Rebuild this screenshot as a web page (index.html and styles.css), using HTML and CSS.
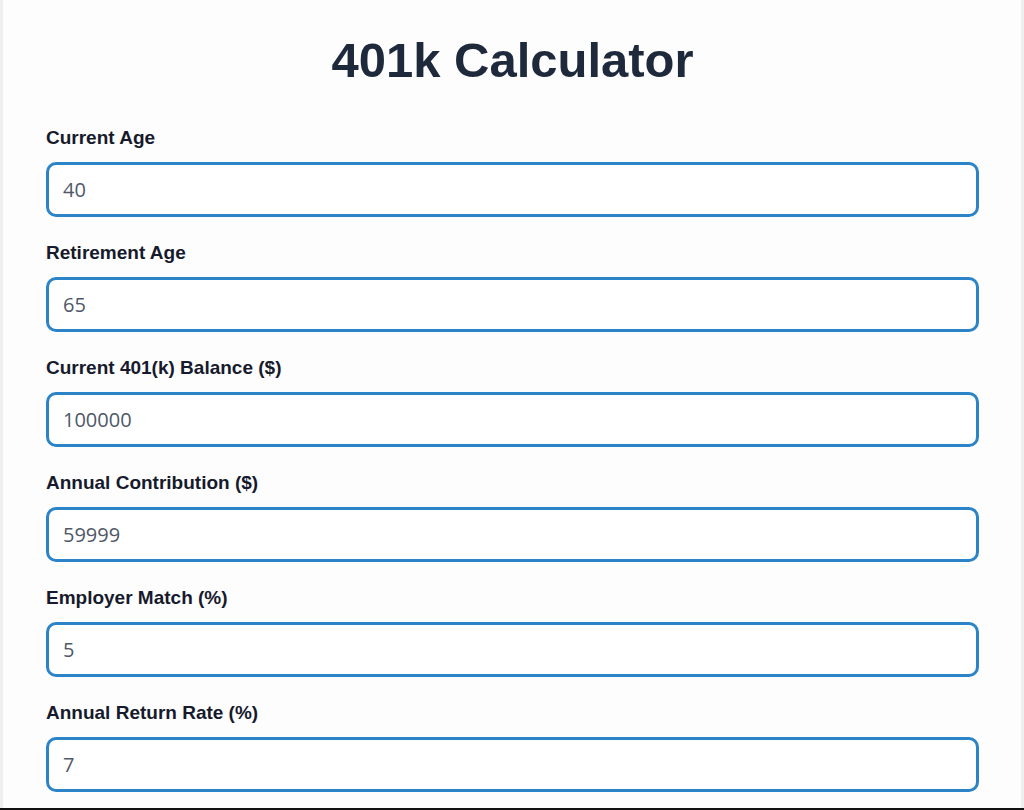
FILE: index.html
```html
<!DOCTYPE html>
<html lang="en">
<head>
    <meta charset="UTF-8">
    <meta name="viewport" content="width=device-width, initial-scale=1.0">
    <title>401k Calculator</title>
    <link rel="stylesheet" href="styles.css">
</head>
<body>
    <div class="calculator">
        <h1>401k Calculator</h1>

        <div class="form-group">
            <label for="currentAge">Current Age</label>
            <input type="number" id="currentAge" value="40">
        </div>
        <div class="form-group">
            <label for="retirementAge">Retirement Age</label>
            <input type="number" id="retirementAge" value="65">
        </div>
        <div class="form-group">
            <label for="currentBalance">Current 401(k) Balance ($)</label>
            <input type="number" id="currentBalance" value="100000">
        </div>
        <div class="form-group">
            <label for="annualContribution">Annual Contribution ($)</label>
            <input type="number" id="annualContribution" value="59999">
        </div>
        <div class="form-group">
            <label for="employerMatch">Employer Match (%)</label>
            <input type="number" id="employerMatch" value="5">
        </div>
        <div class="form-group">
            <label for="returnRate">Annual Return Rate (%)</label>
            <input type="number" id="returnRate" value="7">
        </div>
    </div>
</body>
</html>
```

FILE: styles.css
```css
body {
    margin: 0;
    background-color: #efefef;
    font-family: 'Liberation Sans', Arial, sans-serif;
    color: #1a1d2e;
}
body::after {
    content: '';
    position: fixed;
    left: 0;
    right: 0;
    bottom: 0;
    height: 2px;
    background-color: #111;
}
.calculator {
    margin: 0 3px;
    padding: 32px 42px 20px 43px;
    background-color: #fdfdfd;
    min-height: 900px;
}
h1 {
    margin: 0 0 38px;
    text-align: center;
    font-size: 49px;
    line-height: 56px;
    font-weight: bold;
    color: #1e293b;
}
.form-group {
    margin-bottom: 24px;
}
.form-group label {
    display: block;
    font-size: 19px;
    line-height: 23px;
    font-weight: bold;
    margin-bottom: 13px;
    color: #161a2c;
}
.form-group input {
    display: block;
    width: 100%;
    box-sizing: border-box;
    height: 55px;
    padding: 0 14px;
    border: 3px solid #2b84c7;
    border-radius: 10px;
    background-color: #fff;
    font-family: 'Open Sans', sans-serif;
    font-size: 20px;
    color: #4f5868;
    outline: none;
    -moz-appearance: textfield;
}
.form-group input::-webkit-outer-spin-button,
.form-group input::-webkit-inner-spin-button {
    -webkit-appearance: none;
    margin: 0;
}
```
